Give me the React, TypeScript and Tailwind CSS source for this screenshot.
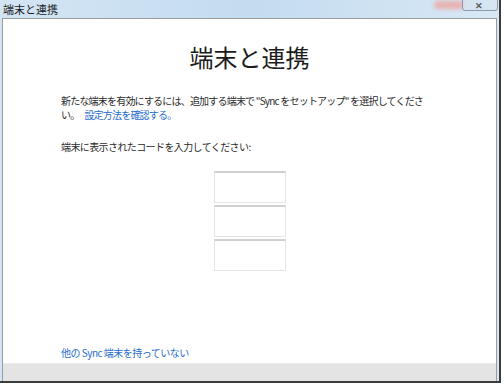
import React from "react";

export default function App() {
  const font = { fontFamily: '"Noto Sans CJK JP", "Noto Sans", sans-serif' };
  return (
    <div className="w-[504px] h-[385px] bg-white relative overflow-hidden" style={font}>
      <div className="w-[501px] h-[383px] flex flex-col bg-gradient-to-r from-[#d3e5f4] via-[#c4dcf0] to-[#d8e8f5] border-r-2 border-b-2 border-[#3c3c3c] pl-[2px] pr-[2px]">
        <div className="h-[18px] flex items-center relative shrink-0">
          <span className="text-[11px] leading-none text-[#1a1a1a] pl-[1px] pt-[1px]">端末と連携</span>
          <div className="absolute left-[432px] top-[1px] w-[30px] h-[8px] rounded-full bg-[#e8b0ae] blur-[2px]" />
          <div className="absolute left-[460px] -top-[3px] w-[36px] h-[14px] rounded-[3px] border border-[#8a9aab] bg-[#d5e3ef]/60" />
          <span className="absolute left-[473px] top-[1px] text-[9px] leading-[9px] font-bold text-[#5a5a5a]">✕</span>
        </div>
        <div className="flex-1 flex flex-col bg-white border border-[#9b9b9b] border-b-0">
          <div className="flex-1 flex flex-col px-[58px] pt-[23px] pb-[4px]">
            <h1 className="text-[24px] leading-[29px] text-center text-[#1c1c1c] font-normal">端末と連携</h1>
            <p className="mt-[23px] text-[10px] leading-[13.5px] text-[#2a2a2a] tracking-[-0.8px]">
              <span className="whitespace-nowrap">新たな端末を有効にするには、追加する端末で "Sync をセットアップ" を選択してくださ</span>
              <br />
              <span>い。</span>
              <span className="text-[#1f6ccc] ml-[5px]">設定方法を確認する。</span>
            </p>
            <p className="mt-[19px] text-[10px] leading-[13.5px] text-[#2a2a2a] tracking-[-0.6px]">端末に表示されたコードを入力してください:</p>
            <div className="mt-[17px] flex flex-col items-center gap-[2px]">
              <div className="w-[72px] h-[32px] border border-[#e1e4e8] border-t-2 border-t-[#d0d0d0] rounded-[1px]" />
              <div className="w-[72px] h-[32px] border border-[#e1e4e8] border-t-2 border-t-[#d0d0d0] rounded-[1px]" />
              <div className="w-[72px] h-[32px] border border-[#e1e4e8] border-t-2 border-t-[#d0d0d0] rounded-[1px]" />
            </div>
            <div className="mt-auto text-[10px] leading-[13.5px] text-[#1f6ccc] tracking-[-0.5px]">他の Sync 端末を持っていない</div>
          </div>
          <div className="h-[18px] bg-[#e4e4e4] border-t border-[#ececec] shrink-0" />
        </div>
      </div>
    </div>
  );
}
